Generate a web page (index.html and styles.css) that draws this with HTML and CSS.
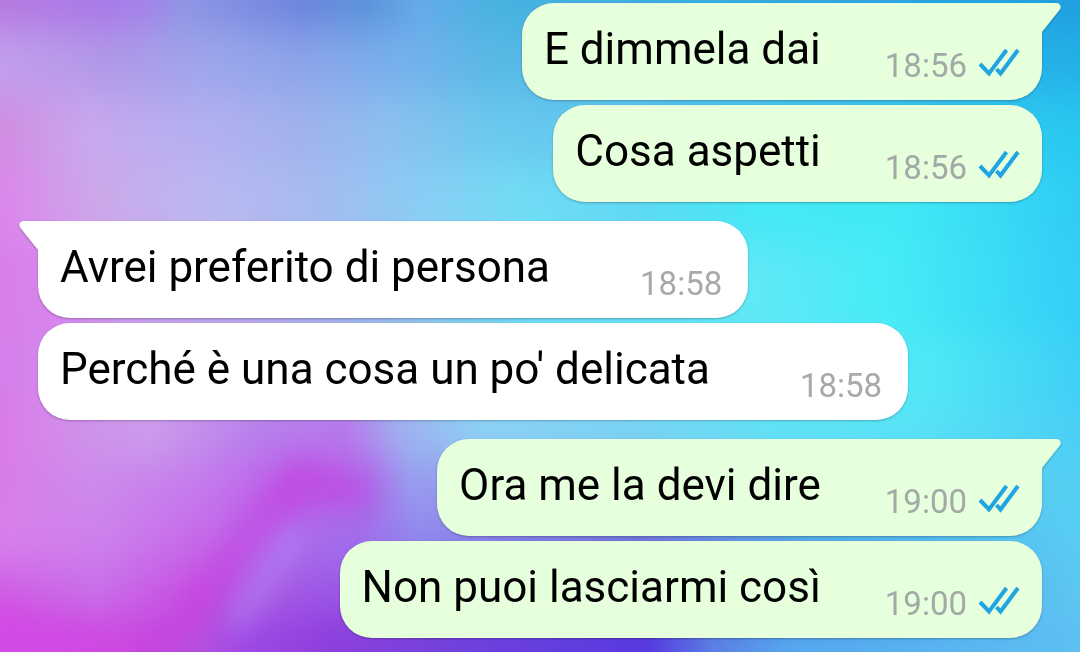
FILE: index.html
```html
<!DOCTYPE html>
<html lang="it">
<head>
    <meta charset="UTF-8">
    <meta name="viewport" content="width=device-width, initial-scale=1.0">
    <title>Chat</title>
    <link rel="stylesheet" href="styles.css">
</head>
<body>
    <!-- wallpaper: colour bands melted together vertically -->
    <svg class="wallpaper" viewBox="0 0 1080 652" preserveAspectRatio="none" aria-hidden="true">
        <defs>
            <filter id="melt" filterUnits="userSpaceOnUse" x="0" y="-100" width="1080" height="860" color-interpolation-filters="sRGB"><feGaussianBlur stdDeviation="0 20"/></filter>
            <filter id="soft" x="-50%" y="-50%" width="200%" height="200%" color-interpolation-filters="sRGB"><feGaussianBlur stdDeviation="12"/></filter>
            <linearGradient id="b1"><stop offset="0" stop-color="#b578e0"/><stop offset=".1" stop-color="#a87ae8"/><stop offset=".13" stop-color="#a480e8"/><stop offset=".17" stop-color="#8e94e4"/><stop offset=".28" stop-color="#6c84dc"/><stop offset=".34" stop-color="#5a92d8"/><stop offset=".39" stop-color="#64aae8"/><stop offset=".46" stop-color="#46b2e0"/><stop offset="1" stop-color="#1f9fdf"/></linearGradient>
            <linearGradient id="b2"><stop offset="0" stop-color="#c2a0ee"/><stop offset=".1" stop-color="#b198e8"/><stop offset=".19" stop-color="#9da6ec"/><stop offset=".28" stop-color="#8ca4ea"/><stop offset=".37" stop-color="#76b0ee"/><stop offset=".46" stop-color="#58b9e6"/><stop offset="1" stop-color="#22b0e8"/></linearGradient>
            <linearGradient id="b3"><stop offset="0" stop-color="#d28ce0"/><stop offset=".08" stop-color="#c8a8ee"/><stop offset=".19" stop-color="#b3b0f0"/><stop offset=".28" stop-color="#a0b2ec"/><stop offset=".36" stop-color="#8cc0ee"/><stop offset=".45" stop-color="#6cc8ee"/><stop offset=".54" stop-color="#62c8f0"/><stop offset="1" stop-color="#28c8f0"/></linearGradient>
            <linearGradient id="b4"><stop offset="0" stop-color="#dc86ec"/><stop offset=".09" stop-color="#cca8e8"/><stop offset=".19" stop-color="#bbb8f0"/><stop offset=".3" stop-color="#a4bcf0"/><stop offset=".38" stop-color="#8cccf4"/><stop offset=".48" stop-color="#72dcf4"/><stop offset=".58" stop-color="#62d8f4"/><stop offset=".7" stop-color="#44e8f6"/><stop offset=".84" stop-color="#40e8f6"/><stop offset="1" stop-color="#30ccf4"/></linearGradient>
            <linearGradient id="b5"><stop offset="0" stop-color="#d87eea"/><stop offset=".05" stop-color="#d884ec"/><stop offset=".14" stop-color="#c4a4ea"/><stop offset=".24" stop-color="#b4aee8"/><stop offset=".37" stop-color="#94c0ea"/><stop offset=".5" stop-color="#66def2"/><stop offset=".7" stop-color="#60e8f6"/><stop offset=".82" stop-color="#46ecf6"/><stop offset="1" stop-color="#34cef6"/></linearGradient>
            <linearGradient id="b6"><stop offset="0" stop-color="#d67eec"/><stop offset=".12" stop-color="#cc98ec"/><stop offset=".3" stop-color="#b090e8"/><stop offset=".44" stop-color="#88d0f2"/><stop offset=".7" stop-color="#60e4f6"/><stop offset=".86" stop-color="#50e8f6"/><stop offset="1" stop-color="#3ed0f6"/></linearGradient>
            <linearGradient id="b7"><stop offset="0" stop-color="#dc7ae8"/><stop offset=".07" stop-color="#d090ea"/><stop offset=".14" stop-color="#cc9cec"/><stop offset=".24" stop-color="#b87eec"/><stop offset=".32" stop-color="#b876ec"/><stop offset=".37" stop-color="#a0b0f0"/><stop offset=".45" stop-color="#8cd4f6"/><stop offset=".58" stop-color="#7cd4f4"/><stop offset=".72" stop-color="#60e4f6"/><stop offset=".84" stop-color="#58e4f6"/><stop offset="1" stop-color="#4ccef6"/></linearGradient>
            <linearGradient id="b8"><stop offset="0" stop-color="#d87cea"/><stop offset=".09" stop-color="#cc8aec"/><stop offset=".19" stop-color="#c478ec"/><stop offset=".27" stop-color="#bc5ce8"/><stop offset=".34" stop-color="#b064e8"/><stop offset=".38" stop-color="#9898ee"/><stop offset=".6" stop-color="#7aa0e8"/><stop offset="1" stop-color="#54d0f4"/></linearGradient>
            <linearGradient id="b9"><stop offset="0" stop-color="#d880ec"/><stop offset=".1" stop-color="#cc80ec"/><stop offset=".19" stop-color="#c668e8"/><stop offset=".26" stop-color="#b06cec"/><stop offset=".33" stop-color="#a070ec"/><stop offset=".39" stop-color="#9088ec"/><stop offset=".59" stop-color="#7074dc"/><stop offset=".75" stop-color="#50b0e8"/><stop offset="1" stop-color="#58ccf4"/></linearGradient>
            <linearGradient id="b10"><stop offset="0" stop-color="#d060e4"/><stop offset=".09" stop-color="#c870e8"/><stop offset=".18" stop-color="#c850e4"/><stop offset=".23" stop-color="#b060e4"/><stop offset=".29" stop-color="#a058e6"/><stop offset=".6" stop-color="#6850e0"/><stop offset="1" stop-color="#5cc8f2"/></linearGradient>
            <linearGradient id="b11"><stop offset="0" stop-color="#d048e4"/><stop offset=".12" stop-color="#cc48e0"/><stop offset=".18" stop-color="#b850e0"/><stop offset=".23" stop-color="#9c48e4"/><stop offset=".3" stop-color="#8e3edc"/><stop offset=".43" stop-color="#6e40dc"/><stop offset=".6" stop-color="#5638e0"/><stop offset=".66" stop-color="#5880e4"/><stop offset=".73" stop-color="#54a8ee"/><stop offset="1" stop-color="#5cc0f2"/></linearGradient>
        </defs>
        <g filter="url(#melt)">
            <rect y="-90" width="1080" height="120" fill="url(#b1)"/>
            <rect y="30" width="1080" height="65" fill="url(#b2)"/>
            <rect y="95" width="1080" height="70" fill="url(#b3)"/>
            <rect y="165" width="1080" height="75" fill="url(#b4)"/>
            <rect y="240" width="1080" height="95" fill="url(#b5)"/>
            <rect y="335" width="1080" height="70" fill="url(#b6)"/>
            <rect y="405" width="1080" height="55" fill="url(#b7)"/>
            <rect y="460" width="1080" height="55" fill="url(#b8)"/>
            <rect y="515" width="1080" height="50" fill="url(#b9)"/>
            <rect y="565" width="1080" height="50" fill="url(#b10)"/>
            <rect y="615" width="1080" height="140" fill="url(#b11)"/>
        </g>
        <g filter="url(#soft)">
            <path d="M300 455L365 485L360 505L310 500L270 535L215 610L165 660L120 660L190 595L240 515Z" fill="#c63ce2" opacity=".5"/>
            <path d="M292 520L305 540L255 610L238 635L228 620Z" fill="#b080f4" opacity=".7"/>
            <path d="M-20 590L40 615L110 645L150 680L-20 680Z" fill="#d648e8" opacity=".5"/>
        </g>
    </svg>

    <!-- shapes shared by the bubbles -->
    <svg class="sprite" aria-hidden="true">
        <symbol id="tail-out" viewBox="0 0 20 31"><path d="M0 0H15C19.500 0 21 4 18.500 7L1 29V31H0Z"/></symbol>
        <symbol id="tail-in" viewBox="0 0 20 31"><path d="M20 0H5C.5 0-1 4 1.500 7L19 29V31H20Z"/></symbol>
        <symbol id="ticks" viewBox="0 0 42 29">
            <path d="M2 16L11 25.500L28.500 2M18.500 21L22.500 25.500L40 2" fill="none" stroke="#1fa5e2" stroke-width="4"/>
        </symbol>
    </svg>

    <main class="chat">
        <div class="message out first">
            <svg class="tail"><use href="#tail-out"/></svg>
            <p class="text">E dimmela dai</p>
            <time class="time">18:56</time>
            <svg class="ticks" role="img" aria-label="Letto"><use href="#ticks"/></svg>
        </div>
        <div class="message out">
            <p class="text">Cosa aspetti</p>
            <time class="time">18:56</time>
            <svg class="ticks" role="img" aria-label="Letto"><use href="#ticks"/></svg>
        </div>
        <div class="message in first">
            <svg class="tail"><use href="#tail-in"/></svg>
            <p class="text">Avrei preferito di persona</p>
            <time class="time">18:58</time>
        </div>
        <div class="message in">
            <p class="text">Perché è una cosa un po' delicata</p>
            <time class="time">18:58</time>
        </div>
        <div class="message out first">
            <svg class="tail"><use href="#tail-out"/></svg>
            <p class="text">Ora me la devi dire</p>
            <time class="time">19:00</time>
            <svg class="ticks" role="img" aria-label="Letto"><use href="#ticks"/></svg>
        </div>
        <div class="message out">
            <p class="text">Non puoi lasciarmi così</p>
            <time class="time">19:00</time>
            <svg class="ticks" role="img" aria-label="Letto"><use href="#ticks"/></svg>
        </div>
    </main>
</body>
</html>
```
FILE: styles.css
```css
* {
    box-sizing: border-box;
}
body {
    margin: 0;
    font-family: Roboto, "Liberation Sans", sans-serif;
    background-color: #8fb8ee;
}
.wallpaper {
    position: fixed;
    top: 0;
    left: 0;
    width: 100%;
    height: 100%;
    z-index: -1;
}
.sprite {
    display: none;
}
.chat {
    display: flex;
    flex-direction: column;
    gap: 5px;
    padding: 3px 38px 14px;
}
.message {
    position: relative;
    display: flex;
    align-items: flex-end;
    max-width: 90%;
    padding: 20px 22px 14px;
    border-radius: 32px;
    filter: drop-shadow(0 1px 1px rgba(0, 0, 0, 0.25));
}
.message.first:not(:first-child) {
    margin-top: 14px;
}
.out {
    align-self: flex-end;
    background-color: #e6ffdc;
}
.in {
    align-self: flex-start;
    background-color: #fff;
    padding-right: 26px;
}
.out.first {
    border-top-right-radius: 0;
}
.in.first {
    border-top-left-radius: 0;
}
.tail {
    position: absolute;
    top: 0;
    width: 20px;
    height: 31px;
}
.out .tail {
    left: 100%;
    margin-left: -1px;
    fill: #e6ffdc;
}
.in .tail {
    right: 100%;
    margin-right: -1px;
    fill: #fff;
}
.text {
    margin: 0 64px 11px 0;
    font-size: 44px;
    line-height: 52px;
    color: #000;
}
.in .text {
    margin-right: 90px;
}
.time {
    font-size: 33px;
    line-height: 40px;
    color: #a3a9a6;
}
.in .time {
    color: #a8a9ac;
}
.ticks {
    width: 42px;
    height: 29px;
    margin: 0 0 9px 11px;
}
```
